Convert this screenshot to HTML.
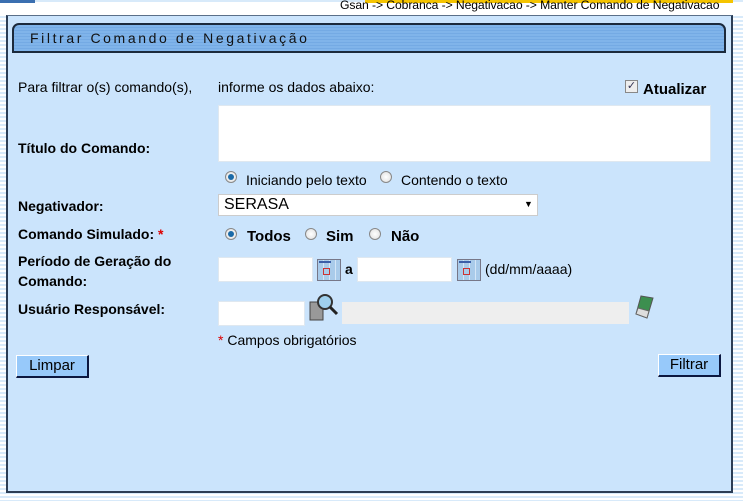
<!DOCTYPE html>
<html><head><meta charset="utf-8"><style>
*{margin:0;padding:0;box-sizing:border-box}
body{width:743px;height:501px;overflow:hidden;position:relative;font-family:"Liberation Sans",Arial,sans-serif;font-size:14px;color:#000;
background:repeating-linear-gradient(180deg,#d8eafa 0,#d8eafa 2px,#fff 2px,#fff 4px)}
.a{position:absolute;white-space:nowrap}
.b{font-weight:bold}
.panel{position:absolute;left:6px;top:15px;width:727px;height:478px;background:#cbe4fc;border:2px solid #2b3d55;border-top:1px solid #5a6f88}
.hdr{position:absolute;left:12px;top:23px;width:714px;height:30px;border:2px solid #1c2a3c;border-radius:7px 7px 0 0;
background:repeating-linear-gradient(180deg,#80b4ea 0,#80b4ea 2px,#74aae4 2px,#74aae4 3px)}
.inp{position:absolute;background:#fff;border:1px solid #dfe8f0}
.rad{position:absolute;width:12px;height:12px;border-radius:50%;border:1px solid #888;background:radial-gradient(#fff,#ddd)}
.rad.on::after{content:"";position:absolute;left:2px;top:2px;width:6px;height:6px;border-radius:50%;background:#1a6aa8}
.btn{position:absolute;height:23px;background:#97c9fa;border:1px solid #fff;border-right:2px solid #0b1740;border-bottom:2px solid #0b1740;font-size:15px;text-align:center;line-height:20px}
.cal{position:absolute;width:24px;height:22px;border:1px solid #778;background:repeating-linear-gradient(90deg,#a9cbea 0,#a9cbea 5px,#d4e6f7 5px,#d4e6f7 6px)}
.cal::before{content:"";position:absolute;left:1px;top:1px;width:12px;height:2px;background:#3b5ea8}
.cal::after{content:"";position:absolute;left:5px;top:8px;width:5px;height:5px;border:1px solid #c33}
</style></head><body>
<div class="a" style="left:0;top:0;width:35px;height:3px;background:#3b6fb0"></div>
<div class="a" style="left:365px;top:0;width:368px;height:3px;background:#f5c400"></div>
<div class="a" style="left:0;top:3px;width:743px;height:11px;background:#fff"></div>
<div class="a" style="left:340px;top:-2px;font-size:12.2px;letter-spacing:-0.1px">Gsan -&gt; Cobranca -&gt; Negativacao -&gt; Manter Comando de Negativacao</div>
<div class="panel"></div>
<div class="hdr"></div>
<div class="a" style="left:30px;top:30px;font-size:14px;letter-spacing:2.6px;color:#111">Filtrar Comando de Negativação</div>
<div class="a" style="left:18px;top:79px">Para filtrar o(s) comando(s),</div>
<div class="a" style="left:218px;top:79px">informe os dados abaixo:</div>
<div class="a" style="left:625px;top:80px;width:13px;height:13px;border:1px solid #888;background:#eee;font-size:11px;line-height:11px;text-align:center;color:#335">✓</div>
<div class="a b" style="left:643px;top:81px;font-size:15px">Atualizar</div>
<div class="inp" style="left:218px;top:105px;width:493px;height:57px"></div>
<div class="a b" style="left:18px;top:140px">Título do Comando:</div>
<div class="rad on" style="left:225px;top:171px"></div>
<div class="a" style="left:246px;top:172px">Iniciando pelo texto</div>
<div class="rad" style="left:380px;top:171px"></div>
<div class="a" style="left:401px;top:172px">Contendo o texto</div>
<div class="a b" style="left:18px;top:198px">Negativador:</div>
<div class="inp" style="left:218px;top:194px;width:320px;height:22px;border-color:#ccc"></div>
<div class="a" style="left:224px;top:196px;font-size:16px">SERASA</div>
<div class="a" style="left:524px;top:199px;font-size:9px">▼</div>
<div class="a b" style="left:18px;top:226px">Comando Simulado: <span style="color:#d00">*</span></div>
<div class="rad on" style="left:225px;top:228px"></div>
<div class="a b" style="left:247px;top:228px;font-size:15px">Todos</div>
<div class="rad" style="left:305px;top:228px"></div>
<div class="a b" style="left:326px;top:228px;font-size:15px">Sim</div>
<div class="rad" style="left:369px;top:228px"></div>
<div class="a b" style="left:391px;top:228px;font-size:15px">Não</div>
<div class="a b" style="left:18px;top:251px;line-height:20px">Período de Geração do<br>Comando:</div>
<div class="inp" style="left:218px;top:257px;width:95px;height:25px"></div>
<div class="cal" style="left:317px;top:259px"></div>
<div class="a b" style="left:345px;top:261px">a</div>
<div class="inp" style="left:357px;top:257px;width:95px;height:25px"></div>
<div class="cal" style="left:457px;top:259px"></div>
<div class="a" style="left:485px;top:261px">(dd/mm/aaaa)</div>
<div class="a b" style="left:18px;top:301px">Usuário Responsável:</div>
<div class="inp" style="left:218px;top:301px;width:87px;height:25px"></div>
<svg class="a" style="left:309px;top:292px" width="32" height="30" viewBox="0 0 32 30"><rect x="1" y="10" width="13" height="18" fill="#999" stroke="#444"/><circle cx="16" cy="10" r="7" fill="#9fd0ee" stroke="#333" stroke-width="2"/><line x1="21" y1="15" x2="28" y2="22" stroke="#222" stroke-width="3"/></svg>
<div class="a" style="left:342px;top:302px;width:287px;height:22px;background:#eee"></div>
<svg class="a" style="left:633px;top:292px" width="26" height="30" viewBox="0 0 26 30"><path d="M8 4 L20 6 L14 26 L3 22 Z" fill="#3c8f4f" stroke="#555"/><path d="M5 16 L16 19 L14 26 L3 22 Z" fill="#ddd" stroke="#666"/></svg>
<div class="a" style="left:218px;top:332px"><span style="color:#d00">*</span> Campos obrigatórios</div>
<div class="btn" style="left:16px;top:355px;width:73px">Limpar</div>
<div class="btn" style="left:658px;top:354px;width:63px">Filtrar</div>
</body></html>
